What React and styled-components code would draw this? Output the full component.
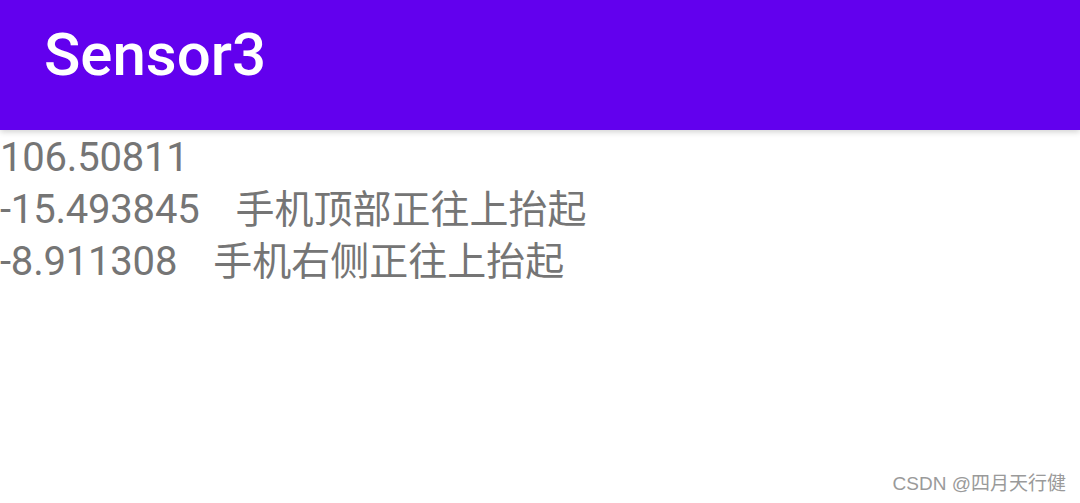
import React from 'react';
import styled, { createGlobalStyle } from 'styled-components';

const GlobalStyle = createGlobalStyle`
  html, body {
    margin: 0;
    padding: 0;
    background: #fff;
  }
  body {
    font-family: Roboto, "Noto Sans CJK SC", sans-serif;
  }
`;

const Screen = styled.div`
  position: relative;
  width: 1080px;
  height: 503px;
  overflow: hidden;
  background: #fff;
`;

const AppBar = styled.header`
  height: 130px;
  background: #6200ee;
  display: flex;
  align-items: center;
  padding-left: 44px;
  box-shadow: 0 2px 6px rgba(0, 0, 0, 0.18);
  position: relative;
  z-index: 1;
`;

const Title = styled.h1`
  margin: 0 0 22px;
  color: #fff;
  font-size: 60px;
  font-weight: 500;
  letter-spacing: 0;
`;

const Content = styled.main`
  display: flex;
  flex-direction: column;
  padding-top: 2px;
`;

const Line = styled.div`
  color: #757575;
  height: 52px;
  line-height: 52px;
  white-space: pre;
`;

const Value = styled.span`
  font-family: Roboto, sans-serif;
  font-size: 40px;
  letter-spacing: -0.2px;
`;

const Note = styled.span`
  font-family: "Noto Sans CJK SC", sans-serif;
  font-size: 39px;
  line-height: 1;
  margin-left: 36px;
`;

const Watermark = styled.span`
  position: absolute;
  right: 14px;
  bottom: 8px;
  color: #9a9a9a;
  font-size: 19px;
  font-family: "Liberation Sans", "Noto Sans CJK SC", sans-serif;
`;

const readings = [
  { value: '106.50811' },
  { value: '-15.493845', note: '手机顶部正往上抬起' },
  { value: '-8.911308', note: '手机右侧正往上抬起' },
];

export default function App() {
  return (
    <Screen>
      <GlobalStyle />
      <AppBar>
        <Title>Sensor3</Title>
      </AppBar>
      <Content>
        {readings.map((r) => (
          <Line key={r.value}>
            <Value>{r.value}</Value>
            {r.note && <Note>{r.note}</Note>}
          </Line>
        ))}
      </Content>
      <Watermark>CSDN @四月天行健</Watermark>
    </Screen>
  );
}
